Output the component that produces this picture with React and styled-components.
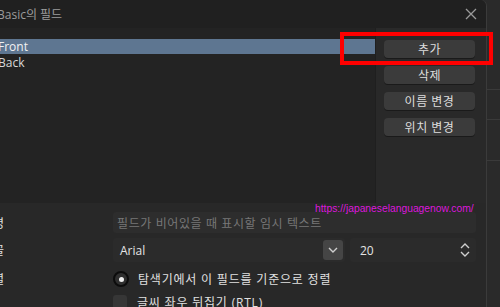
import React from 'react' ;
import styled, { createGlobalStyle } from 'styled-components' ;

const GlobalStyle = createGlobalStyle`
    html, body {
        margin : 0 ;
        padding : 0 ;
        background : #2a2a2a ;
        overflow : hidden ;
    }
    * { box-sizing : border-box ; }
`;

const Screen = styled.div`
    width : 500px ;
    height : 307px ;
    display : flex ;
    position : relative ;
    overflow : hidden ;
    font-family : "Open Sans", "Noto Sans CJK KR", sans-serif ;
`;

const Dialog = styled.div`
    width : 487px ;
    height : 307px ;
    display : flex ;
    flex-direction : column ;
    background : #282828 ;
    border-right : 1px solid #3b3b3b ;
    border-top-right-radius : 6px ;
`;

const TitleBar = styled.div`
    height : 28px ;
    flex-shrink : 0 ;
    display : flex ;
    align-items : center ;
    justify-content : space-between ;
    padding : 0 9px 0 0 ;
    background : #202020 ;
    border-top-right-radius : 6px ;
`;

const Title = styled.span`
    margin-left : -3px ;
    font-size : 12px ;
    color : #9c9c9c ;
`;

const Close = styled.svg`
    width : 12px ;
    height : 12px ;
`;

const Body = styled.div`
    height : 175px ;
    flex-shrink : 0 ;
    display : flex ;
`;

const List = styled.div`
    width : 375px ;
    background : #232323 ;
    padding-top : 11px ;
    display : flex ;
    flex-direction : column ;
`;

const Row = styled.div`
    height : 15px ;
    line-height : 15px ;
    font-size : 12px ;
    margin-left : -2px ;
    color : ${props => props.selected ? '#f2f2f2' : '#d8d8d8'} ;
    background : ${props => props.selected ? '#5e7691' : 'transparent'} ;
    margin-bottom : 1px ;
`;

const Side = styled.div`
    flex : 1 ;
    display : flex ;
    flex-direction : column ;
    gap : 8px ;
    padding : 12px 11px 0 8px ;
    background : #292929 ;
    border-left : 1px solid #1f1f1f ;
`;

const Button = styled.div`
    height : 18px ;
    display : flex ;
    align-items : center ;
    justify-content : center ;
    border-radius : 4px ;
    background : #3b3b3b ;
    box-shadow : 0 1px 0 #1a1a1a ;
    color : #dedede ;
    font-size : 12px ;
    letter-spacing : 0.5px ;
`;

const Highlight = styled.div`
    position : absolute ;
    left : 340px ;
    top : 32px ;
    width : 153px ;
    height : 33px ;
    border : 4px solid #ff0000 ;
`;

const Form = styled.div`
    flex : 1 ;
    display : flex ;
    flex-direction : column ;
    padding : 9px 10px 0 0 ;
    background : #282828 ;
`;

const FormRow = styled.div`
    display : flex ;
    align-items : center ;
    flex-shrink : 0 ;
    height : ${props => props.h}px ;
    margin-top : ${props => props.mt || 0}px ;
`;

const Label = styled.div`
    width : 113px ;
    flex-shrink : 0 ;
    overflow : hidden ;
    font-size : 12px ;
    color : #e0e0e0 ;
    white-space : nowrap ;
    span { margin-left : -18px ; }
`;

const Input = styled.div`
    flex : 1 ;
    height : 100% ;
    display : flex ;
    align-items : center ;
    padding-left : 4px ;
    border-radius : 3px ;
    background : #2d2d2d ;
    font-size : 12px ;
    color : #777777 ;
    letter-spacing : 0.6px ;
`;

const Select = styled.div`
    width : 232px ;
    height : 100% ;
    display : flex ;
    align-items : center ;
    justify-content : space-between ;
    padding : 0 2px 0 7px ;
    border-radius : 3px ;
    background : #2b2b2b ;
    font-size : 12px ;
    color : #e4e4e4 ;
`;

const DropButton = styled.div`
    width : 20px ;
    height : 20px ;
    display : flex ;
    align-items : center ;
    justify-content : center ;
    border-radius : 3px ;
    background : #454545 ;
`;

const Spin = styled.div`
    flex : 1 ;
    height : 100% ;
    margin-left : 5px ;
    display : flex ;
    align-items : center ;
    justify-content : space-between ;
    padding : 0 6px 0 10px ;
    border-radius : 3px ;
    background : #2b2b2b ;
    font-size : 12px ;
    color : #e4e4e4 ;
`;

const Radio = styled.div`
    width : 16px ;
    height : 16px ;
    margin : 0 9px 0 0 ;
    border-radius : 50% ;
    background : #2f2f2f ;
    border : 2px solid #0c0c0c ;
    display : flex ;
    align-items : center ;
    justify-content : center ;
    &::after {
        content : '' ;
        width : 5px ;
        height : 5px ;
        border-radius : 50% ;
        background : #f0f0f0 ;
    }
`;

const Check = styled.div`
    width : 14px ;
    height : 14px ;
    margin : 0 10px 0 0 ;
    border-radius : 3px ;
    background : #363636 ;
`;

const OptionText = styled.span`
    font-size : 12px ;
    color : #e0e0e0 ;
    letter-spacing : 0.8px ;
`;

const Url = styled.div`
    position : absolute ;
    left : 315px ;
    top : 203px ;
    font-family : "Liberation Sans", sans-serif ;
    font-size : 10.3px ;
    color : #dd18dd ;
`;

const Backdrop = styled.div`
    flex : 1 ;
    display : flex ;
    flex-direction : column ;
    background : #2a2a2a ;
`;

const BackBlock = styled.div`
    height : ${props => props.h}px ;
    flex-shrink : 0 ;
    border-bottom : 1px solid #3a3a3a ;
`;

const Chevron = () => (
    <svg width="10" height="6" viewBox="0 0 10 6">
        <path d="M1 1 L5 5 L9 1" fill="none" stroke="#cfcfcf" strokeWidth="1.4" />
    </svg>
) ;

const App = () => {
    const buttons = ['추가', '삭제', '이름 변경', '위치 변경'] ;

    return (
        <Screen>
            <GlobalStyle />
            <Dialog>
                <TitleBar>
                    <Title>Basic의 필드</Title>
                    <Close viewBox="0 0 12 12">
                        <path d="M1 1 L11 11 M11 1 L1 11" stroke="#9a9a9a" strokeWidth="1.3" />
                    </Close>
                </TitleBar>
                <Body>
                    <List>
                        <Row selected>Front</Row>
                        <Row>Back</Row>
                    </List>
                    <Side>
                        {buttons.map(b => <Button key={b}>{b}</Button>)}
                    </Side>
                </Body>
                <Form>
                    <FormRow h={21}>
                        <Label><span>설명</span></Label>
                        <Input>필드가 비어있을 때 표시할 임시 텍스트</Input>
                    </FormRow>
                    <FormRow h={24} mt={5}>
                        <Label><span>글꼴</span></Label>
                        <Select>
                            Arial
                            <DropButton><Chevron /></DropButton>
                        </Select>
                        <Spin>
                            20
                            <svg width="10" height="16" viewBox="0 0 10 16">
                                <path d="M1 6 L5 2 L9 6 M1 10 L5 14 L9 10" fill="none" stroke="#cfcfcf" strokeWidth="1.4" />
                            </svg>
                        </Spin>
                    </FormRow>
                    <FormRow h={18} mt={8}>
                        <Label><span>정렬</span></Label>
                        <Radio />
                        <OptionText>탐색기에서 이 필드를 기준으로 정렬</OptionText>
                    </FormRow>
                    <FormRow h={18} mt={5}>
                        <Label />
                        <Check />
                        <OptionText>글씨 좌우 뒤집기 (RTL)</OptionText>
                    </FormRow>
                </Form>
            </Dialog>
            <Backdrop>
                <BackBlock h={90} />
                <BackBlock h={30} />
                <BackBlock h={41} />
            </Backdrop>
            <Highlight />
            <Url>https://japaneselanguagenow.com/</Url>
        </Screen>
    ) ;
} ;

export default App ;
